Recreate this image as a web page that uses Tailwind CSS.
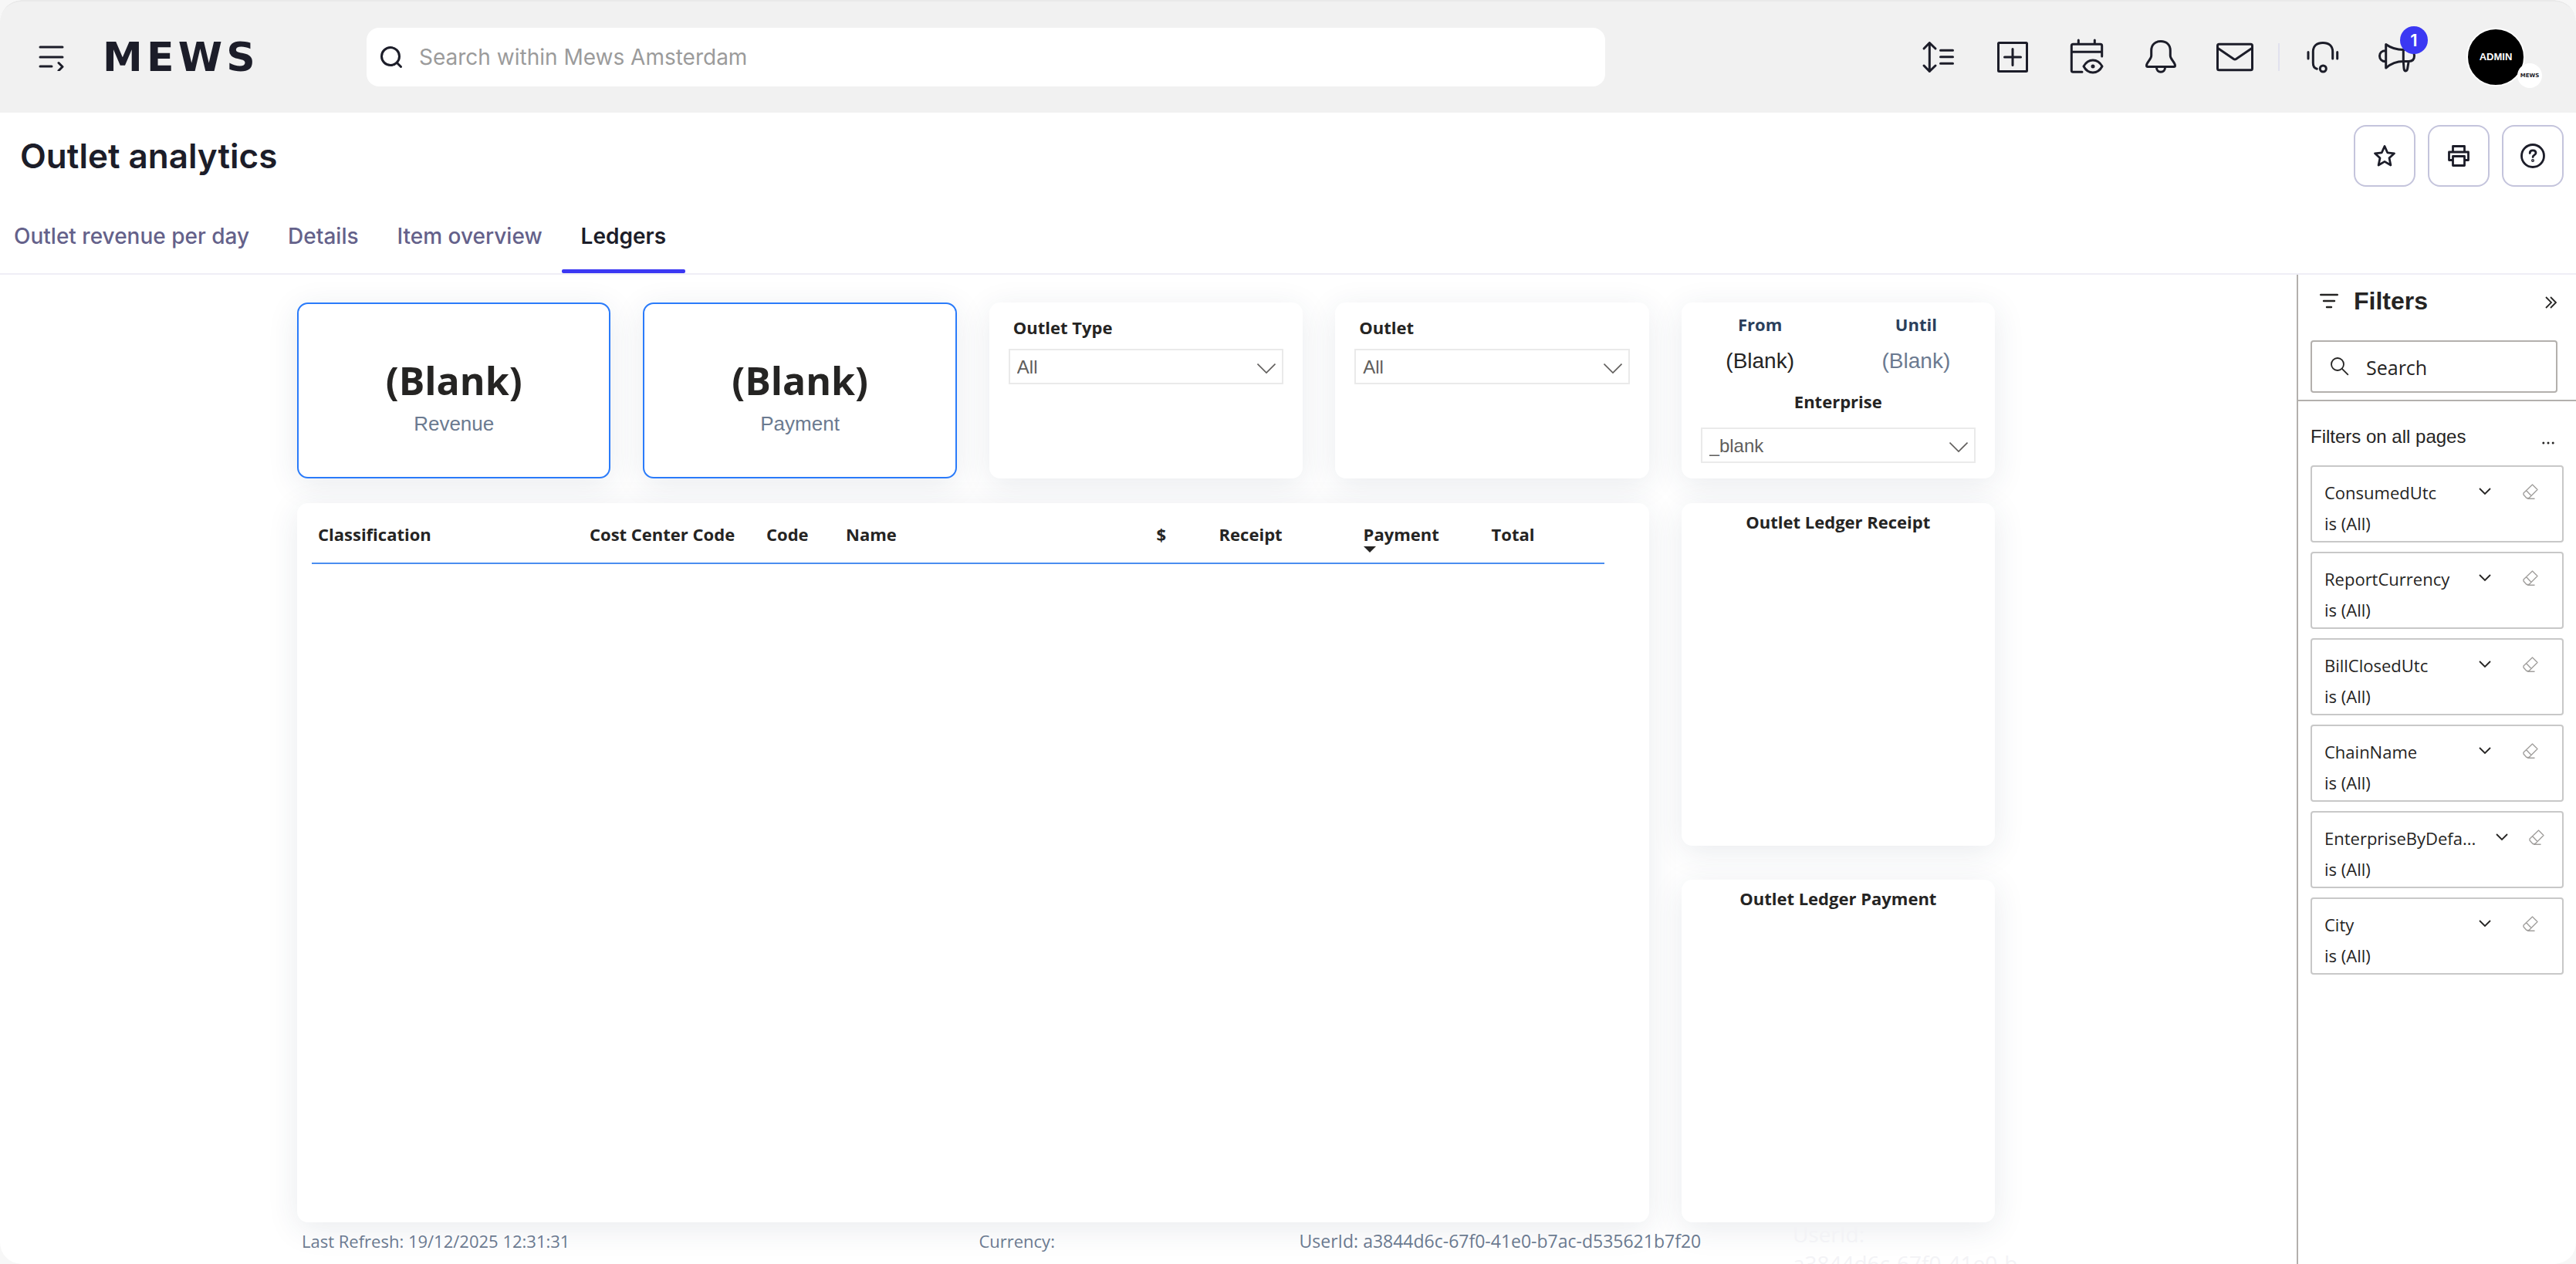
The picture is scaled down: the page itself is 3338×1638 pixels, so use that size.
<!DOCTYPE html>
<html lang="en">
<head>
    <meta charset="UTF-8">
    <meta name="viewport" content="width=device-width, initial-scale=1.0">
    <title>Outlet analytics</title>
    <script src="https://cdn.jsdelivr.net/npm/@tailwindcss/browser@4"></script>
</head>
<body class="bg-[#f7f7f7] text-[#252423]">
    <div class="flex flex-col h-screen bg-white rounded-[28px] overflow-hidden font-['Inter',sans-serif]">

        <!-- Top bar -->
        <header class="flex items-center h-[146px] shrink-0 pl-[50px] pr-[66px] bg-[#f1f1f1] border-t-2 border-[#e9e9e9] rounded-t-[28px] text-[#1c1d29]">
            <button aria-label="Menu" class="w-9 h-9">
                <svg class="w-9 h-9" viewBox="0 0 36 36" fill="none" stroke="currentColor" stroke-width="3" stroke-linecap="round" stroke-linejoin="round">
                    <path d="M2 5h29M2 18h29M2 30h15M26 25.500l5 5-5 5"/>
                </svg>
            </button>
            <a href="#" class="ml-[47px] w-[290px] text-[52px] leading-[56px] font-bold tracking-widest font-['DejaVu_Sans',sans-serif]">MEWS</a>
            <div class="flex items-center h-[76px] w-[1605px] ml-[52px] pl-4 bg-white rounded-[16px]">
                <svg class="w-8 h-8 shrink-0" viewBox="0 0 32 32" fill="none" stroke="currentColor" stroke-width="3" stroke-linecap="round">
                    <circle cx="15" cy="15" r="11.500"/>
                    <path d="M23.500 23.500l5 5"/>
                </svg>
                <input type="text" aria-label="Search within Mews Amsterdam" placeholder="Search within Mews Amsterdam"
                       class="flex-1 h-full ml-5 text-[28px] outline-none placeholder:text-[#9b9b9b]">
            </div>

            <div class="flex items-center ml-auto">
                <div class="flex items-center gap-12">
                    <button aria-label="Sort" class="w-12 h-12">
                        <svg viewBox="0 0 48 48" fill="none" stroke="currentColor" stroke-width="3" stroke-linecap="round" stroke-linejoin="round">
                            <path d="M12.300 5.500v37M5 13l7.300-7.500L20 13M5 35l7.300 7.500L20 35M26.500 15.300h16M26.500 23.800h16M26.500 32.300h16"/>
                        </svg>
                    </button>
                    <button aria-label="Add" class="w-12 h-12">
                        <svg viewBox="0 0 48 48" fill="none" stroke="currentColor" stroke-width="3" stroke-linecap="round" stroke-linejoin="round">
                            <rect x="5.500" y="5.500" width="37" height="37" rx="1"/>
                            <path d="M24 13.500v21M13.500 24h21"/>
                        </svg>
                    </button>
                    <button aria-label="Calendar" class="w-12 h-12">
                        <svg viewBox="0 0 48 48" fill="none" stroke="currentColor" stroke-width="3" stroke-linecap="round" stroke-linejoin="round">
                            <path d="M18 43.300H6.300a2 2 0 0 1-2-2V9.300a2 2 0 0 1 2-2h35.400a2 2 0 0 1 2 2V23M4.300 17.300h39.400M13.300 2v5M34.300 2v5"/>
                            <path d="M20 36c3-5.500 7-8 12-8s9 2.500 12 8c-3 5.500-7 8-12 8s-9-2.500-12-8z"/>
                            <circle cx="32" cy="36" r="1" fill="currentColor"/>
                        </svg>
                    </button>
                    <button aria-label="Notifications" class="w-12 h-12">
                        <svg viewBox="0 0 48 48" fill="none" stroke="currentColor" stroke-width="3" stroke-linecap="round" stroke-linejoin="round">
                            <path d="M24 3.500c-7.500 0-12.300 4.800-12.300 12v6.500c0 5-6.200 8.500-6.200 13 0 1 .5 1.500 1.500 1.500h34c1 0 1.500-.5 1.500-1.500 0-4.500-6.200-8-6.200-13v-6.500c0-7.200-4.800-12-12.300-12z"/>
                            <path d="M18.500 37.500c0 3.500 2.300 5.800 5.500 5.800s5.500-2.300 5.500-5.800"/>
                        </svg>
                    </button>
                    <button aria-label="Messages" class="w-12 h-12">
                        <svg viewBox="0 0 48 48" fill="none" stroke="currentColor" stroke-width="3" stroke-linecap="round" stroke-linejoin="round">
                            <rect x="1.500" y="7.300" width="45" height="33.400" rx="2"/>
                            <path d="M2 12.500l20.500 14q1.500 1 3 0L46 12.500"/>
                        </svg>
                    </button>
                </div>
                <div class="w-0.5 h-9 mx-8 bg-[#e1e1ee]"></div>
                <div class="flex items-center gap-12">
                    <button aria-label="Support" class="w-12 h-12">
                        <svg viewBox="0 0 48 48" fill="none" stroke="currentColor" stroke-width="3" stroke-linecap="round">
                            <path d="M36.700 26V17c0-7.500-5-11.500-12.700-11.500S11.300 9.500 11.300 17v14.500c0 4.500 1.700 7 5 7.700M5 17.500v8.500M42.700 17.500v8.500"/>
                            <circle cx="24.300" cy="39" r="4"/>
                        </svg>
                    </button>
                    <button aria-label="Announcements" class="relative w-12 h-12">
                        <svg viewBox="0 0 48 48" fill="none" stroke="currentColor" stroke-width="3" stroke-linecap="round" stroke-linejoin="round">
                            <path d="M9.300 15.700C4.500 15.700 1.500 18.500 1.500 22.500s3 7.200 7.800 7.200"/>
                            <path d="M9.700 7.500v30.500c7-6 14-8.500 22.600-8.500v-15c-8.600 0-15.600-2-22.600-7z"/>
                            <path d="M32.300 14.300h7c5 0 7.200 3.500 7.200 8s-2.200 7.200-7.200 7.200h-7M32.300 29.500l.7 9c.5 4.500 4 4.500 4.700 0l1.500-9"/>
                        </svg>
                        <span class="absolute -top-4 left-7 w-9 h-9 rounded-full bg-[#3b38f3] text-white text-[22px] leading-9 font-semibold">1</span>
                    </button>
                </div>
                <button class="relative w-[76px] h-[76px] ml-[66px] rounded-full bg-black border-2 border-white text-white text-[13px] font-bold font-['Liberation_Sans',sans-serif]">
                    ADMIN
                    <span class="absolute left-16 top-11 w-8 h-8 rounded-full bg-white text-[#1c1d29] text-[7px] leading-8 font-['DejaVu_Sans',sans-serif]">MEWS</span>
                </button>
            </div>
        </header>

        <!-- Page title -->
        <div class="flex items-center justify-between h-28 shrink-0 pl-[26px] pr-4 text-[#1c1d29]">
            <h1 class="text-[44px] font-semibold">Outlet analytics</h1>
            <div class="flex gap-4">
                <button aria-label="Favourite" class="flex items-center justify-center w-20 h-20 border-2 border-[#c4c4dc] rounded-[16px]">
                    <svg class="w-8 h-8" viewBox="0 0 32 32" fill="none" stroke="currentColor" stroke-width="2.800" stroke-linejoin="round">
                        <path d="M16 3.500l3.700 8.300 8.800 1-6.500 6 1.900 9.200-7.900-4.600L8.100 28 10 18.800l-6.500-6 8.800-1z"/>
                    </svg>
                </button>
                <button aria-label="Print" class="flex items-center justify-center w-20 h-20 border-2 border-[#c4c4dc] rounded-[16px]">
                    <svg class="w-8 h-8" viewBox="0 0 32 32" fill="none" stroke="currentColor" stroke-width="2.800" stroke-linejoin="round">
                        <path d="M8.500 11V3.500h15V11M8.500 21.500H3.500V11h25v10.500h-5"/>
                        <rect x="8.500" y="16.500" width="15" height="12"/>
                    </svg>
                </button>
                <button aria-label="Help" class="flex items-center justify-center w-20 h-20 border-2 border-[#c4c4dc] rounded-[16px]">
                    <svg class="w-8 h-8" viewBox="0 0 32 32" fill="none" stroke="currentColor" stroke-width="2.800" stroke-linecap="round">
                        <circle cx="16" cy="16" r="14.500"/>
                        <path d="M12.200 12.500c0-2.200 1.600-3.600 3.900-3.600s3.900 1.400 3.900 3.400c0 2.700-3.900 2.500-3.900 5.200"/>
                        <circle cx="16" cy="22" r=".6" fill="currentColor"/>
                    </svg>
                </button>
            </div>
        </div>

        <!-- Tabs -->
        <nav class="flex h-[98px] shrink-0 border-b-2 border-[#efeef6] text-[28px] font-medium text-[#64618a]">
            <a href="#" class="flex items-center pl-[18px] pr-[25px]">Outlet revenue per day</a>
            <a href="#" class="flex items-center px-[25px]">Details</a>
            <a href="#" class="flex items-center px-[25px]">Item overview</a>
            <a href="#" class="relative flex items-center px-[25px] font-semibold text-[#1c1d29]">
                Ledgers
                <span class="absolute inset-x-0 bottom-0 h-[5px] rounded-[2px] bg-[#3b38f3]"></span>
            </a>
        </nav>

        <div class="flex flex-1 min-h-0">
            <!-- Report -->
            <main class="flex-1 min-w-0 pr-1.5 overflow-hidden font-['Open_Sans',sans-serif] text-[22px] leading-8">
                <div class="flex flex-col h-full max-w-[2200px] mx-auto pt-9">
                    <div class="grid grid-cols-5 gap-x-[42px] gap-y-8 grid-rows-[228px_1fr] flex-1">
                        <section class="pt-[67px] text-center bg-white border-2 border-[#2a7bfa] rounded-[14px] shadow-[0_8px_40px_rgba(40,60,90,0.1)]">
                            <p class="text-[50px] leading-[64px] font-bold">(Blank)</p>
                            <p class="mt-2 text-[26px] leading-8 text-[#6b7a90] font-['Liberation_Sans',sans-serif]">Revenue</p>
                        </section>
                        <section class="pt-[67px] text-center bg-white border-2 border-[#2a7bfa] rounded-[14px] shadow-[0_8px_40px_rgba(40,60,90,0.1)]">
                            <p class="text-[50px] leading-[64px] font-bold">(Blank)</p>
                            <p class="mt-2 text-[26px] leading-8 text-[#6b7a90] font-['Liberation_Sans',sans-serif]">Payment</p>
                        </section>
                        <section class="pt-4 px-[25px] bg-white rounded-[14px] shadow-[0_8px_40px_rgba(40,60,90,0.1)]">
                            <label for="outletType" class="block pl-1.5 font-bold">Outlet Type</label>
                            <div class="relative mt-3">
                                <select id="outletType" class="appearance-none block w-full h-[46px] pl-[9px] pt-0.5 border-2 border-[#eaeaea] text-[24px] text-[#605e5c] font-['Liberation_Sans',sans-serif]">
                                    <option>All</option>
                                </select>
                                <svg class="absolute right-2.5 top-3.5 w-6 h-6 pointer-events-none" viewBox="0 0 24 24" fill="none" stroke="#605e5c" stroke-width="1.600"><path d="M.500 5.500L12 17 23.500 5.500"/></svg>
                            </div>
                        </section>
                        <section class="pt-4 px-[25px] bg-white rounded-[14px] shadow-[0_8px_40px_rgba(40,60,90,0.1)]">
                            <label for="outlet" class="block pl-1.5 font-bold">Outlet</label>
                            <div class="relative mt-3">
                                <select id="outlet" class="appearance-none block w-full h-[46px] pl-[9px] pt-0.5 border-2 border-[#eaeaea] text-[24px] text-[#605e5c] font-['Liberation_Sans',sans-serif]">
                                    <option>All</option>
                                </select>
                                <svg class="absolute right-2.5 top-3.5 w-6 h-6 pointer-events-none" viewBox="0 0 24 24" fill="none" stroke="#605e5c" stroke-width="1.600"><path d="M.500 5.500L12 17 23.500 5.500"/></svg>
                            </div>
                        </section>
                        <section class="pt-3 px-[25px] bg-white rounded-[14px] shadow-[0_8px_40px_rgba(40,60,90,0.1)]">
                            <div class="grid grid-cols-2 -mx-6 text-center">
                                <p class="font-bold text-[#2b3f5c]">From</p>
                                <p class="font-bold text-[#2b3f5c]">Until</p>
                                <p class="mt-4 text-[28px] font-['Liberation_Sans',sans-serif]">(Blank)</p>
                                <p class="mt-4 text-[28px] text-[#6b7a90] font-['Liberation_Sans',sans-serif]">(Blank)</p>
                            </div>
                            <label for="enterprise" class="block mt-5 text-center font-bold">Enterprise</label>
                            <div class="relative mt-[18px]">
                                <select id="enterprise" class="appearance-none block w-full h-[46px] pl-[9px] pt-0.5 border-2 border-[#eaeaea] text-[24px] text-[#605e5c] font-['Liberation_Sans',sans-serif]">
                                    <option>_blank</option>
                                </select>
                                <svg class="absolute right-2.5 top-3.5 w-6 h-6 pointer-events-none" viewBox="0 0 24 24" fill="none" stroke="#605e5c" stroke-width="1.600"><path d="M.500 5.500L12 17 23.500 5.500"/></svg>
                            </div>
                        </section>

                        <section class="col-span-4 pt-6 pl-[19px] pr-[58px] bg-white rounded-[14px] shadow-[0_8px_40px_rgba(40,60,90,0.1)]">
                            <table class="w-full table-fixed text-left">
                                <thead>
                                    <tr class="h-[54px] border-b-2 border-[#4a8ef0] align-top">
                                        <th class="w-[352px] pl-2 font-bold">Classification</th>
                                        <th class="w-[229px] pl-2 font-bold whitespace-nowrap">Cost Center Code</th>
                                        <th class="w-[103px] pl-2 font-bold">Code</th>
                                        <th class="pl-2 font-bold">Name</th>
                                        <th class="w-[81px] pl-2 font-bold">$</th>
                                        <th class="w-[187px] pl-2 font-bold">Receipt</th>
                                        <th class="w-[166px] pl-2 font-bold">
                                            Payment
                                            <svg class="w-4 h-2" viewBox="0 0 16 8" fill="#252423"><path d="M0 0h16L8 8z"/></svg>
                                        </th>
                                        <th class="w-[154px] pl-2 font-bold">Total</th>
                                    </tr>
                                </thead>
                            </table>
                        </section>
                        <div class="flex flex-col gap-11">
                            <section class="flex-1 pt-2 bg-white rounded-[14px] shadow-[0_8px_40px_rgba(40,60,90,0.1)]">
                                <h2 class="text-center font-bold">Outlet Ledger Receipt</h2>
                            </section>
                            <section class="flex-1 pt-2 bg-white rounded-[14px] shadow-[0_8px_40px_rgba(40,60,90,0.1)]">
                                <h2 class="text-center font-bold">Outlet Ledger Payment</h2>
                            </section>
                        </div>
                    </div>

                    <footer class="grid grid-cols-[877fr_415fr_639fr_262fr] h-[54px] pt-2 pl-1.5 text-[#6b7a90]">
                        <p>Last Refresh: 19/12/2025 12:31:31</p>
                        <p>Currency:</p>
                        <p class="text-[23px]">UserId: a3844d6c-67f0-41e0-b7ac-d535621b7f20</p>
                        <p class="min-w-0 -mt-3 text-[28px] leading-[38px] whitespace-nowrap text-[#f3f3f6]">UserId:<br>a3844d6c-67f0-41e0-b</p>
                    </footer>
                </div>
            </main>

            <!-- Filter pane -->
            <aside class="w-[362px] shrink-0 border-l-2 border-[#b3b0ad] font-['Open_Sans',sans-serif]">
                <div class="pt-4 pl-4 pr-6 pb-[9px] border-b-2 border-[#b3b0ad]">
                    <div class="flex items-center h-9 pl-3">
                        <svg class="w-6 h-6" viewBox="0 0 24 24" fill="none" stroke="#252423" stroke-width="2.400" stroke-linecap="round"><path d="M1.200 4h21.600M5 12h14M9 20h6"/></svg>
                        <h2 class="ml-5 text-[32px] leading-9 font-bold font-['Liberation_Sans',sans-serif]">Filters</h2>
                        <button aria-label="Collapse" class="ml-auto mt-1 w-4 h-4">
                            <svg class="w-4 h-4" viewBox="0 0 16 16" fill="none" stroke="#252423" stroke-width="1.800"><path d="M1 1l7 7-7 7M7 1l7 7-7 7"/></svg>
                        </button>
                    </div>
                    <div class="flex items-center h-[68px] mt-[33px] pl-6 border-2 border-[#b3b0ad] rounded-[4px]">
                        <svg class="w-6 h-6 shrink-0" viewBox="0 0 24 24" fill="none" stroke="#252423" stroke-width="1.800"><circle cx="9" cy="9" r="8"/><path d="M14.800 14.800l8 8"/></svg>
                        <input type="text" aria-label="Search filters" placeholder="Search" class="w-full h-full pl-[22px] pt-0.5 text-[25px] outline-none placeholder:text-[#252423]">
                    </div>
                </div>
                <div class="pt-[30px] px-4">
                    <div class="flex items-center justify-between h-8 pr-3">
                        <h3 class="text-[24px] leading-8 font-['Liberation_Sans',sans-serif]">Filters on all pages</h3>
                        <button aria-label="More options" class="mt-4">
                            <svg class="w-4 h-1" viewBox="0 0 16 4" fill="#252423"><circle cx="1.800" cy="2" r="1.500"/><circle cx="8" cy="2" r="1.500"/><circle cx="14.200" cy="2" r="1.500"/></svg>
                        </button>
                    </div>
                    <ul id="filterCards" class="flex flex-col gap-3 mt-[21px] text-[22px] leading-10"></ul>
                </div>
            </aside>
        </div>
    </div>

    <template id="filterCard">
        <li class="h-[100px] pt-[13px] pl-4 border-2 border-[#c8c8c8] rounded-[4px]">
            <div class="flex items-center h-10">
                <span class="name w-[200px] truncate"></span>
                <button aria-label="Expand" class="w-4 h-4 mb-0.5">
                    <svg class="w-4 h-4" viewBox="0 0 16 16" fill="none" stroke="#252423" stroke-width="1.800"><path d="M1 4l7 7 7-7"/></svg>
                </button>
                <button aria-label="Clear filter" class="eraser w-5 h-5 ml-[41px] mb-0.5">
                    <svg class="w-5 h-5" viewBox="0 0 20 20" fill="none" stroke="#a19f9d" stroke-width="1.400" stroke-linejoin="round"><path d="M12.500 1l6.500 6.500L8 18.500H5L1 14v-2zM4.500 8.500l6.500 7M6 19.300h9.500"/></svg>
                </button>
            </div>
            <p>is (All)</p>
        </li>
    </template>

    <script>
        const filters = [
            { name: 'ConsumedUtc' },
            { name: 'ReportCurrency' },
            { name: 'BillClosedUtc' },
            { name: 'ChainName' },
            { name: 'EnterpriseByDefa...', long: true },
            { name: 'City' }
        ];
        const list = document.getElementById('filterCards');
        const template = document.getElementById('filterCard');

        filters.forEach(filter => {
            const card = template.content.cloneNode(true);
            const name = card.querySelector('.name');
            name.textContent = filter.name;
            // long names push the icons to the right
            if (filter.long) {
                name.classList.replace('w-[200px]', 'w-[222px]');
                card.querySelector('.eraser').classList.replace('ml-[41px]', 'ml-[27px]');
            }
            list.appendChild(card);
        });
    </script>
</body>
</html>
